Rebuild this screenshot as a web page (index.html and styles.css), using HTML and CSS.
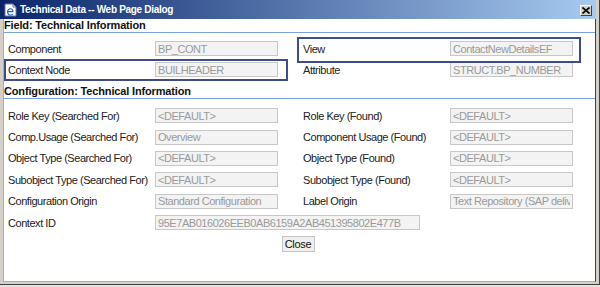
FILE: index.html
```html
<!DOCTYPE html>
<html lang="en">
<head>
    <meta charset="UTF-8">
    <title>Technical Data -- Web Page Dialog</title>
    <link rel="stylesheet" href="styles.css">
</head>
<body>
    <div class="dialog">
        <div class="titlebar">
            <svg class="app-icon" width="13" height="14" viewBox="0 0 13 14">
                <path d="M1 1h8l3 3v9H1z" fill="#fff" stroke="#6a7a9a" stroke-width="1"/>
                <path d="M9 1v3h3" fill="none" stroke="#6a7a9a" stroke-width="1"/>
                <path d="M9.5 9.2H4.2c.2 1.6 1.2 2.3 2.4 2.3.9 0 1.6-.3 2.2-.8l.6.9c-.8.6-1.8 1-2.9 1C4.6 12.6 3 11.2 3 8.9 3 6.7 4.5 5.2 6.4 5.2c1.9 0 3.1 1.3 3.1 3.4zM4.3 8.1h4c-.1-1.1-.8-1.8-1.9-1.8-1 0-1.8.7-2.1 1.8z" fill="#1f5fd0"/>
            </svg>
            <span class="title">Technical Data -- Web Page Dialog</span>
            <span class="close-x">
                <svg width="8" height="7" viewBox="0 0 8 7">
                    <path d="M0.5 0.5l7 6M7.5 0.5l-7 6" stroke="#000" stroke-width="1.6"/>
                </svg>
            </span>
        </div>
        <div class="content">
            <div class="section-title">Field: Technical Information</div>
            <div class="form-grid field-rows">
                <label>Component</label>
                <input class="value" readonly value="BP_CONT">
                <span></span>
                <label>View</label>
                <input class="value" readonly value="ContactNewDetailsEF">

                <label>Context Node</label>
                <input class="value" readonly value="BUILHEADER">
                <span></span>
                <label>Attribute</label>
                <input class="value" readonly value="STRUCT.BP_NUMBER">
            </div>

            <div class="section-title second">Configuration: Technical Information</div>
            <div class="form-grid config-rows">
                <label>Role Key (Searched For)</label>
                <input class="value" readonly value="&lt;DEFAULT&gt;">
                <span></span>
                <label>Role Key (Found)</label>
                <input class="value" readonly value="&lt;DEFAULT&gt;">

                <label>Comp.Usage (Searched For)</label>
                <input class="value" readonly value="Overview">
                <span></span>
                <label>Component Usage (Found)</label>
                <input class="value" readonly value="&lt;DEFAULT&gt;">

                <label>Object Type (Searched For)</label>
                <input class="value" readonly value="&lt;DEFAULT&gt;">
                <span></span>
                <label>Object Type (Found)</label>
                <input class="value" readonly value="&lt;DEFAULT&gt;">

                <label>Subobject Type (Searched For)</label>
                <input class="value" readonly value="&lt;DEFAULT&gt;">
                <span></span>
                <label>Subobject Type (Found)</label>
                <input class="value" readonly value="&lt;DEFAULT&gt;">

                <label>Configuration Origin</label>
                <input class="value" readonly value="Standard Configuration">
                <span></span>
                <label>Label Origin</label>
                <input class="value" readonly value="Text Repository (SAP delivered)">

                <label>Context ID</label>
                <input class="value wide" readonly value="95E7AB016026EEB0AB6159A2AB451395802E477B">
            </div>

            <div class="actions">
                <button type="button">Close</button>
            </div>

            <div class="mark mark-node"></div>
            <div class="mark mark-view"></div>
        </div>
    </div>
</body>
</html>
```

FILE: styles.css
```css
body {
    margin: 0;
    padding: 0;
    background: #e4e4e4;
    font-family: "Liberation Sans", Arial, sans-serif;
}
.dialog {
    width: 600px;
    height: 285px;
    box-sizing: border-box;
    background: #d4d0c8;
    border-right: 1px solid #404040;
    border-bottom: 1px solid #404040;
    padding: 0 3px 2px 0;
    display: flex;
    flex-direction: column;
}
.titlebar {
    height: 19px;
    flex: none;
    display: flex;
    align-items: center;
    padding: 0 4px 0 4px;
    background: linear-gradient(to right, #0a246a, #a6caf0);
    color: #fff;
}
.app-icon {
    flex: none;
    margin-right: 3px;
}
.title {
    font-size: 10px;
    font-weight: bold;
    letter-spacing: -0.3px;
    flex: 1;
}
.close-x {
    width: 12px;
    height: 11px;
    box-sizing: border-box;
    background: #d4d0c8;
    border: 1px solid;
    border-color: #fff #404040 #404040 #fff;
    display: flex;
    align-items: center;
    justify-content: center;
    margin-top: 2px;
}
.content {
    position: relative;
    flex: 1;
    margin-left: 3px;
    background: #fff;
    border-right: 1px solid #404040;
    border-left: 1px solid #b0ada6;
    border-bottom: 1px solid #b0ada6;
}
.section-title {
    height: 13px;
    line-height: 13px;
    padding-left: 0;
    font-size: 11px;
    font-weight: bold;
    letter-spacing: -0.15px;
    color: #111;
    border-bottom: 1px solid #7ba2e0;
}
.section-title.second {
    margin-top: 5px;
}
.form-grid {
    display: grid;
    grid-template-columns: 147px 123px 25px 147px 123px;
    padding-left: 4px;
    align-items: center;
}
.field-rows {
    padding-top: 5px;
    grid-auto-rows: 21px;
}
.config-rows {
    padding-top: 6px;
    grid-auto-rows: 21.4px;
}
.form-grid label {
    font-size: 11px;
    letter-spacing: -0.45px;
    color: #222;
}
.value {
    height: 15px;
    box-sizing: border-box;
    width: 123px;
    margin: 0;
    padding: 0 2px;
    border: 1px solid #c8c8c8;
    background: #f3f3f3;
    color: #9a9a9a;
    font-family: "Liberation Sans", Arial, sans-serif;
    font-size: 11px;
    letter-spacing: -0.45px;
    outline: none;
}
.value.wide {
    grid-column: 2 / 5;
    width: 265px;
}
.actions {
    display: flex;
    justify-content: center;
    padding-top: 3px;
    padding-right: 3px;
}
.actions button {
    height: 16px;
    width: 33px;
    padding: 0;
    border: 1px solid #c4c4c4;
    background: #efefef;
    font-family: "Liberation Sans", Arial, sans-serif;
    font-size: 11px;
    letter-spacing: -0.3px;
    color: #111;
}
.mark {
    position: absolute;
    border: 2px solid #3e4c8a;
    box-sizing: border-box;
}
.mark-node {
    left: 0;
    top: 40px;
    width: 284px;
    height: 22px;
}
.mark-view {
    left: 293px;
    top: 18px;
    width: 284px;
    height: 26px;
}
```
